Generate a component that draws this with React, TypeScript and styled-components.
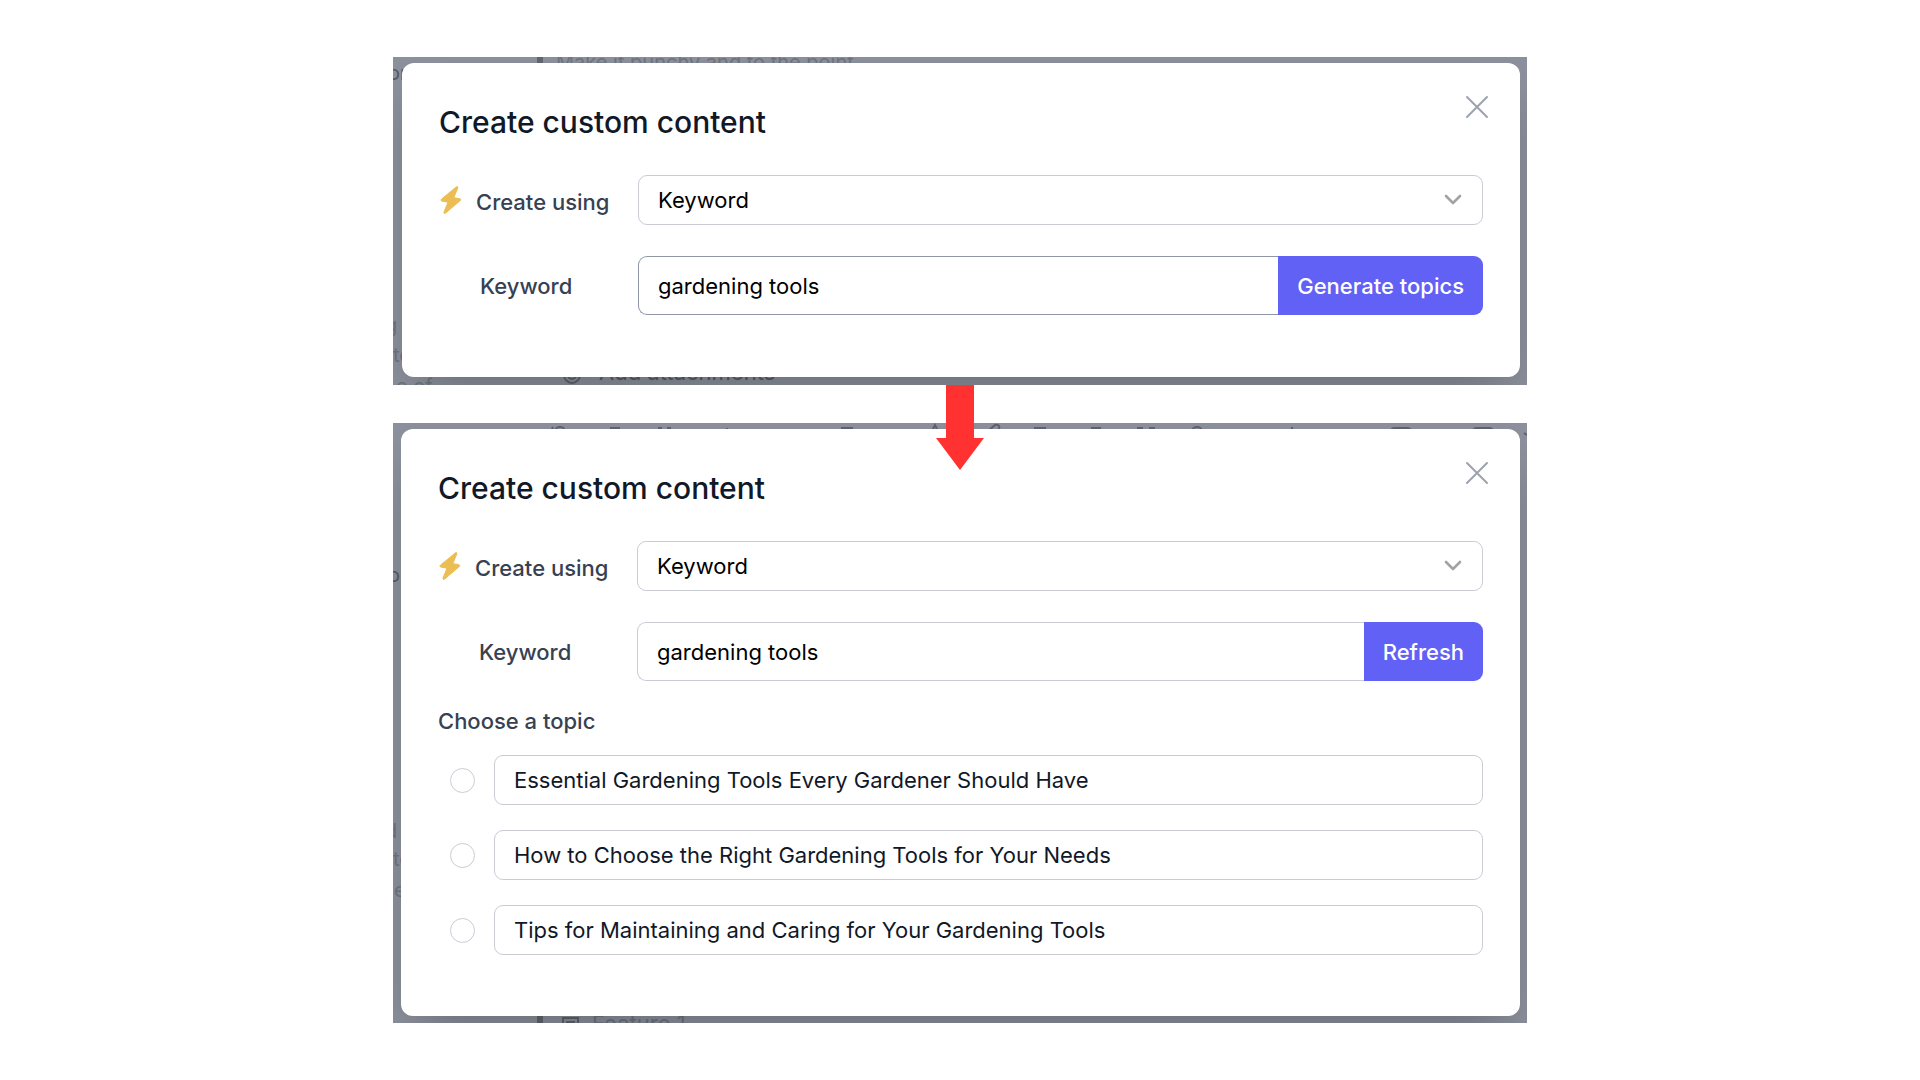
import React from "react";
import styled, { createGlobalStyle } from "styled-components";

const Global = createGlobalStyle`
  *, *::before, *::after { box-sizing: border-box; }
  body { margin: 0; background: #fff; font-family: Inter, "Liberation Sans", sans-serif; }
`;

const Page = styled.main`
  display: flex;
  flex-direction: column;
  align-items: center;
  gap: 38px;
  padding: 57px 24px;
`;

const Stage = styled.section`
  position: relative;
  width: 100%;
  max-width: 1134px;
`;

const Backdrop = styled.div<{ $left: number; $bottom: number }>`
  position: relative;
  overflow: hidden;
  padding: 6px 7px ${(p) => p.$bottom}px ${(p) => p.$left}px;
  background: #8c919d;
`;

const Ghost = styled.span<{ $x: number; $y: number; $size?: number; $dark?: boolean }>`
  position: absolute;
  left: ${(p) => p.$x}px;
  top: ${(p) => p.$y}px;
  font-size: ${(p) => p.$size ?? 20}px;
  line-height: 24px;
  white-space: nowrap;
  color: ${(p) => (p.$dark ? "#565a64" : "#6f747f")};
`;

const GhostBar = styled.span<{ $y: number }>`
  position: absolute;
  left: 144px;
  top: ${(p) => p.$y}px;
  width: 6px;
  height: 10px;
  background: #62666f;
`;

const GhostIcon = styled.svg<{ $x: number; $y: number }>`
  position: absolute;
  left: ${(p) => p.$x}px;
  top: ${(p) => p.$y}px;
  fill: none;
  stroke: #5f636d;
  stroke-width: 2;
`;

const Dialog = styled.div<{ $bottom: number }>`
  position: relative;
  padding: 39px 37px ${(p) => p.$bottom}px;
  border-radius: 12px;
  background: #fff;
  box-shadow: 0 25px 50px -12px rgba(0, 0, 0, 0.25);
`;

const Header = styled.header`
  display: flex;
  justify-content: space-between;
  align-items: flex-start;
  margin-bottom: 33px;
`;

const Title = styled.h2`
  margin: 0;
  font-size: 30px;
  font-weight: 500;
  line-height: 40px;
  color: #111827;
`;

const CloseButton = styled.button`
  display: flex;
  margin: -9px -12px 0 0;
  padding: 0;
  border: 0;
  background: none;
  color: #9ca3af;
`;

const Rows = styled.div`
  display: grid;
  gap: 31px;
`;

const Row = styled.div`
  display: grid;
  grid-template-columns: 199px 1fr;
  align-items: center;
`;

const RowLabel = styled.label<{ $indent?: boolean }>`
  display: flex;
  align-items: center;
  gap: 14px;
  padding-left: ${(p) => (p.$indent ? 41 : 0)}px;
  font-size: 22px;
  font-weight: 500;
  line-height: 28px;
  color: #374151;
`;

const LabelText = styled.span`
  padding-top: 4px;
`;

const SelectWrap = styled.div`
  display: grid;
  align-items: center;
  > * { grid-area: 1 / 1; }
  > svg { justify-self: end; margin-right: 21px; pointer-events: none; }
`;

const Select = styled.select`
  appearance: none;
  width: 100%;
  height: 50px;
  padding: 0 48px 0 19px;
  border: 1px solid #c9cdd3;
  border-radius: 9px;
  background: #fff;
  font: 400 22px/28px Inter, "Liberation Sans", sans-serif;
  color: #000;
`;

const InputGroup = styled.div`
  display: flex;
  height: 59px;
`;

const TextInput = styled.input<{ $active: boolean }>`
  flex: 1;
  min-width: 0;
  padding: 0 19px;
  border: 1px solid ${(p) => (p.$active ? "#8f97a5" : "#c9cdd3")};
  border-right: 0;
  border-radius: 9px 0 0 9px;
  font: 400 22px/28px Inter, "Liberation Sans", sans-serif;
  color: #000;
  outline: none;
`;

const ActionButton = styled.button`
  padding: 0 19px;
  border: 0;
  border-radius: 0 9px 9px 0;
  background: #6161f6;
  font: 500 22px/28px Inter, "Liberation Sans", sans-serif;
  color: #fff;
`;

const Topics = styled.fieldset`
  display: flex;
  flex-direction: column;
  gap: 25px;
  margin: 26px 0 0;
  padding: 0;
  border: 0;
`;

const Legend = styled.legend`
  margin-bottom: 20px;
  padding: 0;
  font-size: 22px;
  font-weight: 500;
  line-height: 28px;
  color: #374151;
`;

const Topic = styled.label`
  display: flex;
  align-items: center;
  gap: 19px;
  padding-left: 12px;
`;

const Radio = styled.input`
  appearance: none;
  flex: none;
  width: 25px;
  height: 25px;
  margin: 0;
  border: 1px solid #c9cdd3;
  border-radius: 50%;
`;

const TopicText = styled.span`
  flex: 1;
  padding: 10px 19px;
  border: 1px solid #c9cdd3;
  border-radius: 9px;
  font-size: 22px;
  line-height: 28px;
  color: #111827;
`;

const ArrowSvg = styled.svg`
  position: absolute;
  top: 100%;
  left: 50%;
  z-index: 2;
  margin-left: -24px;
`;

const Bolt = () => (
  <svg width="23" height="30" viewBox="0 0 23 30" aria-hidden="true">
    <path
      d="M17.4 1.9 2.4 14.2c-.7.6-.5 1.6.4 1.8l6.2 1.2-4 9.9c-.4 1.1.7 1.8 1.6 1L21.3 15.5c.7-.6.4-1.6-.4-1.8l-6.1-1 4-9.8c.4-1-.6-1.7-1.4-1z"
      fill="#ecbd52"
      stroke="#ecbd52"
      strokeWidth="1"
    />
  </svg>
);

const CloseIcon = () => (
  <svg width="36" height="28" viewBox="0 0 36 28" fill="none" stroke="currentColor" strokeWidth="2" strokeLinecap="round" aria-hidden="true">
    <path d="M8 4l20 20M28 4L8 24" />
  </svg>
);

const Chevron = () => (
  <svg width="18" height="12" viewBox="0 0 18 12" fill="none" stroke="#a3a3a7" strokeWidth="2.6" strokeLinecap="round" strokeLinejoin="round" aria-hidden="true">
    <path d="M2 2l7 7 7-7" />
  </svg>
);

type FormProps = { id: string; action: string; active: boolean };

const KeywordForm = ({ id, action, active }: FormProps) => (
  <>
    <Header>
      <Title>Create custom content</Title>
      <CloseButton type="button" aria-label="Close"><CloseIcon /></CloseButton>
    </Header>
    <Rows>
      <Row>
        <RowLabel htmlFor={`${id}-source`}><Bolt /><LabelText>Create using</LabelText></RowLabel>
        <SelectWrap>
          <Select id={`${id}-source`} defaultValue="Keyword"><option>Keyword</option></Select>
          <Chevron />
        </SelectWrap>
      </Row>
      <Row>
        <RowLabel $indent htmlFor={`${id}-keyword`}>Keyword</RowLabel>
        <InputGroup>
          <TextInput id={`${id}-keyword`} type="text" defaultValue="gardening tools" $active={active} />
          <ActionButton type="button">{action}</ActionButton>
        </InputGroup>
      </Row>
    </Rows>
  </>
);

const topics = [
  "Essential Gardening Tools Every Gardener Should Have",
  "How to Choose the Right Gardening Tools for Your Needs",
  "Tips for Maintaining and Caring for Your Gardening Tools",
];

export default function App() {
  return (
    <Page>
      <Global />
      <Stage>
        <Backdrop $left={9} $bottom={8}>
          <GhostBar $y={0} />
          <Ghost $x={163} $y={-7}>Make it punchy and to the point</Ghost>
          <Ghost $x={-5} $y={4} $dark>or</Ghost>
          <Ghost $x={-8} $y={256}>g</Ghost>
          <Ghost $x={0} $y={286}>to</Ghost>
          <Ghost $x={3} $y={317}>e of</Ghost>
          <GhostIcon $x={169} $y={308} width="20" height="20" aria-hidden="true">
            <circle cx="10" cy="10" r="8" />
            <path d="M6 10a4 4 0 0 0 8 0" />
          </GhostIcon>
          <Ghost $x={206} $y={303} $size={22} $dark>Add attachments</Ghost>
          <Dialog $bottom={62}>
            <KeywordForm id="generate" action="Generate topics" active />
          </Dialog>
        </Backdrop>
        <ArrowSvg width="48" height="85" viewBox="0 0 48 85" aria-hidden="true">
          <path d="M10 0H38V53H48L24 85 0 53H10z" fill="#ff3131" />
        </ArrowSvg>
      </Stage>
      <Stage>
        <Backdrop $left={8} $bottom={7}>
          <GhostIcon $x={0} $y={0} width="1134" height="14" aria-hidden="true">
            <path d="M158 8l2-4M162 8a5 4 0 0 1 10 0M217 5h10M265 5h4M274 5h4M334 5v3M448 5h12M539 8l3-6 3 6M594 9l8-7q3-1 4 1t-1 4M641 5h12M698 5h10M744 5h6M756 5h6M799 8a5 4 0 0 1 10 0M899 4v4M998 9q0-4 4-4h12q4 0 4 4M1080 9q0-4 4-4h12q4 0 4 4M1131 10l3 2" />
          </GhostIcon>
          <Ghost $x={-5} $y={140} $dark>or</Ghost>
          <Ghost $x={-8} $y={396}>d</Ghost>
          <Ghost $x={0} $y={424}>to</Ghost>
          <Ghost $x={1} $y={455}>e</Ghost>
          <GhostBar $y={593} />
          <GhostIcon $x={168} $y={593} width="20" height="16" aria-hidden="true">
            <path d="M2 12V2h15v10M5 6h9" />
          </GhostIcon>
          <Ghost $x={199} $y={588} $size={22}>Feature 1</Ghost>
          <Dialog $bottom={61}>
            <KeywordForm id="refresh" action="Refresh" active={false} />
            <Topics>
              <Legend>Choose a topic</Legend>
              {topics.map((t) => (
                <Topic key={t}><Radio type="radio" name="topic" /><TopicText>{t}</TopicText></Topic>
              ))}
            </Topics>
          </Dialog>
        </Backdrop>
      </Stage>
    </Page>
  );
}
